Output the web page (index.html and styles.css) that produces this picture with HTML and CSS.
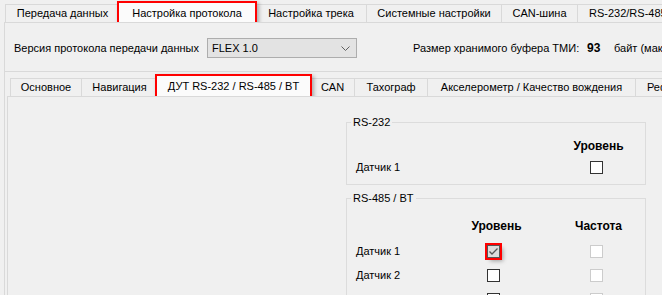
FILE: index.html
```html
<!DOCTYPE html>
<html lang="ru">
<head>
<meta charset="utf-8">
<title>Настройка протокола</title>
<link rel="stylesheet" href="styles.css">
</head>
<body>
<div class="tabs tabs-top">
  <div class="tab t1">Передача данных</div>
  <div class="tab tab-active t2">Настройка протокола</div>
  <div class="tab t3">Настройка трека</div>
  <div class="tab t4">Системные настройки</div>
  <div class="tab t5">CAN-шина</div>
  <div class="tab t6">RS-232/RS-485 Передача</div>
</div>
<div class="page">
  <div class="settings">
    <span class="lbl-version">Версия протокола передачи данных</span>
    <div class="select">
      <span>FLEX 1.0</span>
      <svg class="chevron" width="9" height="5" viewBox="0 0 9 5"><path d="M0.5 0.5 L4.5 4.5 L8.5 0.5" fill="none" stroke="#606060" stroke-width="1"/></svg>
    </div>
    <span class="lbl-buffer">Размер хранимого буфера ТМИ:</span>
    <b class="buffer-value">93</b>
    <span class="buffer-unit">байт (максимум 1024)</span>
  </div>
  <div class="inner">
    <div class="tabs tabs-inner">
      <div class="tab i1">Основное</div>
      <div class="tab i2">Навигация</div>
      <div class="tab tab-active i3">ДУТ RS-232 / RS-485 / BT</div>
      <div class="tab i4">CAN</div>
      <div class="tab i5">Тахограф</div>
      <div class="tab i6">Акселерометр / Качество вождения</div>
      <div class="tab i7">Рефрижератор</div>
    </div>
    <div class="inner-page">
      <fieldset class="group">
        <legend>RS-232</legend>
        <div class="grid grid-232">
          <span class="head col4">Уровень</span>
          <span class="name">Датчик 1</span>
          <span class="cb col4 cb-pos4"></span>
        </div>
      </fieldset>
      <fieldset class="group group-485">
        <legend>RS-485 / BT</legend>
        <div class="grid grid-485">
          <span class="head col2">Уровень</span>
          <span class="head col4">Частота</span>
          <span class="name">Датчик 1</span>
          <span class="cb col2 cb-pos2 cb-checked"><svg width="11" height="11" viewBox="0 0 11 11"><path d="M1.5 5.5 L4 8 L9.5 2.5" fill="none" stroke="#555" stroke-width="1.3"/></svg></span>
          <span class="cb col4 cb-pos4 cb-disabled"></span>
          <span class="name">Датчик 2</span>
          <span class="cb col2 cb-pos2"></span>
          <span class="cb col4 cb-pos4 cb-disabled"></span>
          <span class="name">Датчик 3</span>
          <span class="cb col2 cb-pos2"></span>
          <span class="cb col4 cb-pos4 cb-disabled"></span>
        </div>
      </fieldset>
    </div>
  </div>
</div>
</body>
</html>
```
FILE: styles.css
```css
html, body {
  margin: 0;
  padding: 0;
}
body {
  width: 662px;
  height: 295px;
  overflow: hidden;
  background: #f0f0f0;
  font-family: "Liberation Sans", Arial, sans-serif;
  font-size: 11px;
  color: #000;
}

.tabs {
  display: flex;
  align-items: flex-end;
  white-space: nowrap;
  overflow: hidden;
}
.tabs-top {
  height: 22px;
  padding-left: 5px;
}
.tabs-inner {
  height: 24px;
  padding-left: 3px;
}
.tab {
  box-sizing: border-box;
  flex: none;
  height: 18px;
  line-height: 17px;
  border-top: 1px solid #d9d9d9;
  border-left: 1px solid #d9d9d9;
  background: #f0f0f0;
  text-align: center;
  overflow: hidden;
}
.tab-active {
  position: relative;
  z-index: 2;
  margin: 0 -2px -2px -2px;
  border: 2px solid #ff0000;
  background: #fbfbfb;
  box-shadow: 2px 2px 4px rgba(0, 0, 0, 0.3);
}
.tabs-top .tab-active {
  height: 23px;
  padding-top: 1px;
  line-height: 18px;
}
.tabs-inner .tab-active {
  height: 24px;
  line-height: 20px;
}

.t1 { width: 114px; }
.t2 { width: 140px; }
.t3 { width: 111px; }
.t4 { width: 135px; }
.t5 { width: 76px; }
.t6 { width: 150px; text-align: left; padding-left: 11px; }

.i1 { width: 71px; }
.i2 { width: 76px; }
.i3 { width: 157px; }
.i4 { width: 44px; }
.i5 { width: 73px; }
.i6 { width: 208px; }
.i7 { width: 90px; text-align: left; padding-left: 11px; }

.page {
  margin-left: 4px;
  border-left: 1px solid #d9d9d9;
  border-top: 1px solid #d9d9d9;
}
.settings {
  display: flex;
  align-items: center;
  height: 46px;
  padding: 2px 0 0 9px;
  border-bottom: 1px solid #d9d9d9;
  white-space: nowrap;
  overflow: hidden;
}
.lbl-version {
  width: 193px;
  flex: none;
}
.select {
  box-sizing: border-box;
  flex: none;
  width: 150px;
  height: 20px;
  display: flex;
  align-items: center;
  justify-content: space-between;
  padding: 0 6px 0 4px;
  background: #e3e3e3;
  border: 1px solid #adadad;
}
.chevron {
  display: block;
}
.lbl-buffer {
  flex: none;
  width: 174px;
  margin-left: 56px;
}
.buffer-value {
  flex: none;
  width: 27px;
  font-size: 12px;
}
.buffer-unit {
  flex: none;
}

.inner {
  margin-left: 2px;
}
.inner-page {
  height: 220px;
  border-left: 1px solid #d9d9d9;
  border-top: 1px solid #d9d9d9;
  padding: 18px 0 0 338px;
}

.group {
  box-sizing: border-box;
  width: 300px;
  margin: 0;
  padding: 0 0 0 9px;
  border: 1px solid #dcdcdc;
}
.group legend {
  margin-left: -5px;
  padding: 0 2px;
  line-height: 14px;
  font-size: 11px;
}
.group-485 {
  margin-top: 6px;
}

.grid {
  display: grid;
  grid-template-columns: 111px 56px 46px 56px;
  align-items: center;
}
.grid-232 {
  margin-top: 9px;
  padding-bottom: 4px;
  grid-template-rows: 16px 26px;
}
.grid-485 {
  margin-top: 13px;
  grid-template-rows: 16px 5px 24px 24px 24px;
}
.grid-485 .name,
.grid-485 .cb {
  grid-row: auto;
}
.grid-485 > :nth-child(3),
.grid-485 > :nth-child(4),
.grid-485 > :nth-child(5) { grid-row: 3; }
.grid-485 > :nth-child(6),
.grid-485 > :nth-child(7),
.grid-485 > :nth-child(8) { grid-row: 4; }
.grid-485 > :nth-child(9),
.grid-485 > :nth-child(10),
.grid-485 > :nth-child(11) { grid-row: 5; }

.head {
  font-weight: bold;
  font-size: 12px;
  text-align: center;
  padding-left: 3px;
}
.col2 { grid-column: 2; }
.col4 { grid-column: 4; }
.name { grid-column: 1; }

.cb {
  box-sizing: border-box;
  width: 13px;
  height: 13px;
  border: 1px solid #333;
  background: #fff;
  justify-self: start;
  display: flex;
  align-items: center;
  justify-content: center;
}
.cb-pos2 { margin-left: 20px; }
.cb-pos4 { margin-left: 21px; }
.cb-disabled {
  border-color: #cccccc;
}
.cb-checked {
  background: #dcdcdc;
  border-color: #555;
  outline: 2px solid #ff0000;
  box-shadow: 3px 3px 4px rgba(0, 0, 0, 0.35);
}
.cb-checked svg {
  display: block;
}
```
